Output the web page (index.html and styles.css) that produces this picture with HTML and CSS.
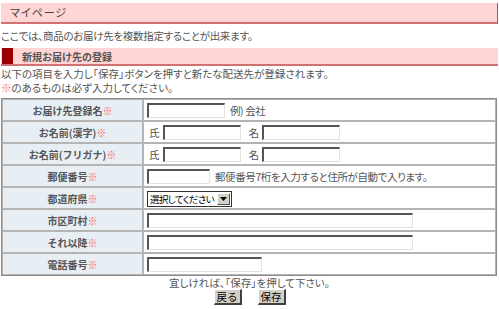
FILE: index.html
```html
<!DOCTYPE html>
<html lang="ja">
<head>
  <meta charset="utf-8">
  <title>マイページ</title>
  <link rel="stylesheet" href="styles.css">
</head>
<body>
  <div class="page">
    <h1 class="page-title">マイページ</h1>
    <p class="lead">ここでは、商品のお届け先を複数指定することが出来ます。</p>
    <h2 class="section-title"><span class="mark"></span>新規お届け先の登録</h2>
    <p class="note">以下の項目を入力し「保存」ボタンを押すと新たな配送先が登録されます。<br><span class="req">※</span>のあるものは必ず入力してください。</p>
    <form>
      <table class="form-table">
        <tr>
          <th>お届け先登録名<span class="req">※</span></th>
          <td><input type="text" class="w-name"><span class="hint">例) 会社</span></td>
        </tr>
        <tr>
          <th>お名前(漢字)<span class="req">※</span></th>
          <td><span class="pre">氏</span><input type="text" class="w-half"><span class="pre mid">名</span><input type="text" class="w-half"></td>
        </tr>
        <tr>
          <th>お名前(フリガナ)<span class="req">※</span></th>
          <td><span class="pre">氏</span><input type="text" class="w-half"><span class="pre mid">名</span><input type="text" class="w-half"></td>
        </tr>
        <tr>
          <th>郵便番号<span class="req">※</span></th>
          <td><input type="text" class="w-zip"><span class="hint">郵便番号7桁を入力すると住所が自動で入ります。</span></td>
        </tr>
        <tr>
          <th>都道府県<span class="req">※</span></th>
          <td>
            <div class="select-box">
              <select name="pref">
                <option>選択してください</option>
              </select>
              <span class="select-arrow"><svg width="7" height="4" viewBox="0 0 7 4"><path d="M0 0h7L3.5 4z" fill="#000"/></svg></span>
            </div>
          </td>
        </tr>
        <tr>
          <th>市区町村<span class="req">※</span></th>
          <td><input type="text" class="w-long"></td>
        </tr>
        <tr>
          <th>それ以降<span class="req">※</span></th>
          <td><input type="text" class="w-long"></td>
        </tr>
        <tr>
          <th>電話番号<span class="req">※</span></th>
          <td><input type="text" class="w-tel"></td>
        </tr>
      </table>
      <p class="confirm">宜しければ、「保存」を押して下さい。</p>
      <div class="buttons">
        <button type="button" class="btn">戻る</button>
        <button type="button" class="btn">保存</button>
      </div>
    </form>
  </div>
</body>
</html>
```

FILE: styles.css
```css
body {
  margin: 0;
  font-family: "Noto Sans CJK JP", sans-serif;
  font-size: 10.5px;
  color: #555;
  font-feature-settings: "palt";
}
.page {
  padding: 3px 1px 0 1px;
}
.page-title {
  margin: 0;
  height: 19px;
  line-height: 19px;
  padding-left: 9px;
  background-color: #ffd5d5;
  border-bottom: 2px solid #d07272;
  border-right: 1px solid #a05a5a;
  font-size: 11px;
  font-weight: normal;
  letter-spacing: 1px;
  color: #444;
}
.lead {
  margin: 6px 0 0;
  line-height: 12px;
  letter-spacing: -0.3px;
}
.section-title {
  display: flex;
  align-items: center;
  gap: 9px;
  margin: 6px 0 0;
  height: 16px;
  background-color: #ffd5d5;
  border-bottom: 2px solid #d07272;
  font-size: 10px;
  font-weight: bold;
  font-feature-settings: normal;
  color: #555;
}
.section-title .mark {
  width: 11px;
  height: 16px;
  margin-left: 1px;
  background-color: #990000;
}
.note {
  margin: 1px 0 0;
  line-height: 14px;
}
.req {
  color: #ff5a5a;
}
.form-table {
  width: 496px;
  margin-top: 3px;
  border-collapse: separate;
  border-spacing: 0;
  border: 1px solid #8c8c8c;
}
.form-table th,
.form-table td {
  height: 20px;
  padding: 0 0 0 3px;
  border: 1px solid #b4b4b4;
}
.form-table th {
  width: 139px;
  padding: 0;
  background-color: #e8eff4;
  color: #555;
  font-size: 10px;
  font-weight: bold;
  font-feature-settings: normal;
  text-align: center;
}
.form-table td {
  background-color: #fff;
}
.form-table input {
  box-sizing: border-box;
  height: 15px;
  margin: 0;
  padding: 0 2px;
  vertical-align: middle;
  border-style: solid;
  border-width: 2px 1px 1px 2px;
  border-color: #555 #e4e2dc #e4e2dc #555;
  background-color: #fff;
  font-size: 11px;
}
.w-name { width: 78px; }
.w-half { width: 78px; }
.w-zip { width: 63px; }
.w-long { width: 266px; }
.w-tel { width: 115px; }
.hint {
  margin-left: 5px;
  vertical-align: middle;
  letter-spacing: -0.4px;
}
.pre {
  margin: 0 3px 0 2px;
  vertical-align: middle;
}
.pre.mid {
  margin-left: 8px;
}
.select-box {
  display: inline-flex;
  align-items: stretch;
  height: 16px;
  box-sizing: border-box;
  vertical-align: middle;
  border: 1px solid #333;
  background-color: #fff;
}
.select-box select {
  appearance: none;
  -webkit-appearance: none;
  width: 68px;
  margin: 0;
  padding: 0 0 0 2px;
  border: none;
  background: #fff;
  font-family: "Noto Sans CJK JP", sans-serif;
  font-feature-settings: "palt";
  font-size: 9.5px;
  letter-spacing: -0.6px;
  color: #000;
  outline: none;
}
.select-arrow {
  display: flex;
  align-items: center;
  justify-content: center;
  width: 11px;
  margin: 1px;
  background-color: #d4d0c8;
  border-style: solid;
  border-width: 1px;
  border-color: #fff #555 #555 #fff;
}
.confirm {
  margin: 1px 0 0;
  line-height: 12px;
  text-align: center;
}
.buttons {
  display: flex;
  justify-content: center;
  gap: 16px;
  margin-top: 0;
}
.btn {
  height: 16px;
  padding: 0 2px;
  background-color: #d4d0c8;
  border-style: solid;
  border-width: 1px 2px 2px 1px;
  border-color: #fff #404040 #404040 #fff;
  font-family: inherit;
  font-size: 10.5px;
  line-height: 12px;
  color: #000;
}
```
